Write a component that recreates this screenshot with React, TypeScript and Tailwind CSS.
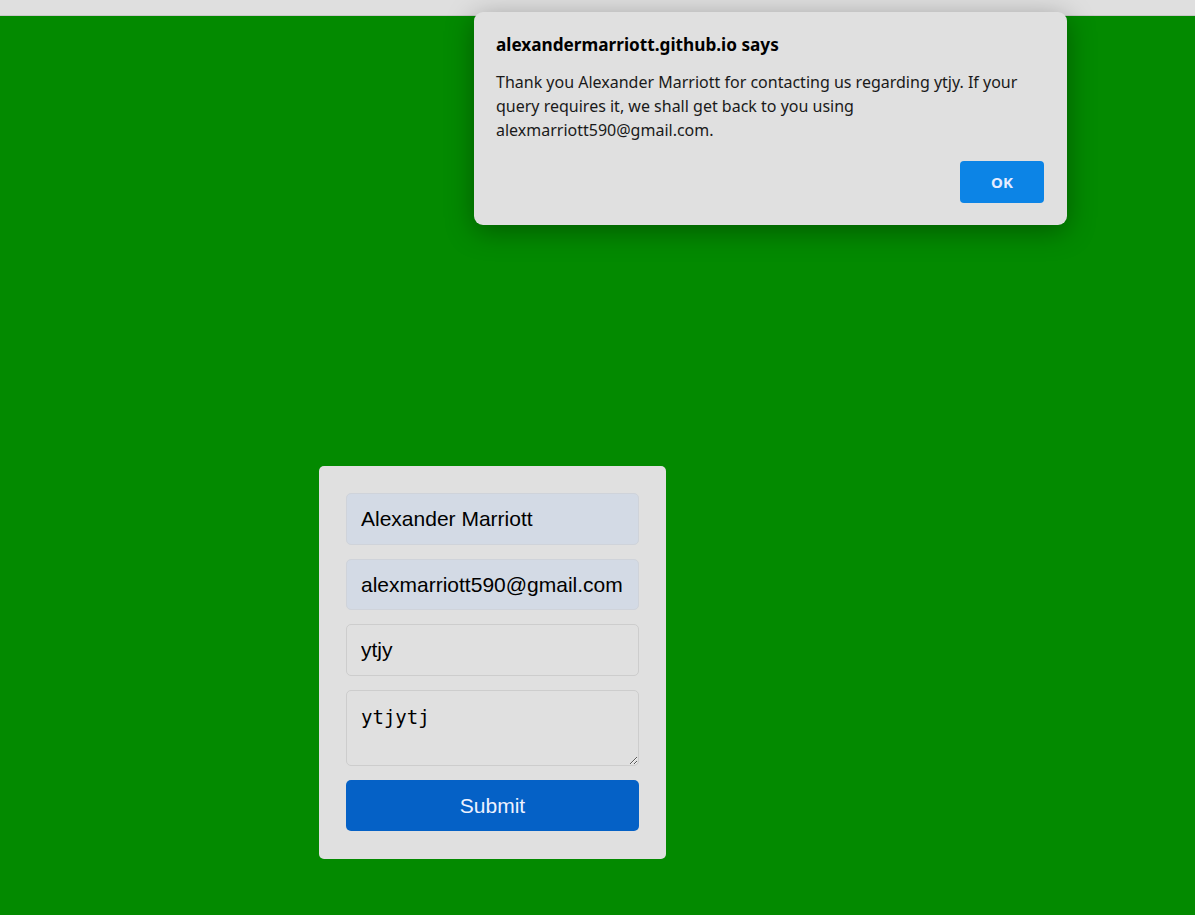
import { useState } from 'react';

export default function App() {
  const [name, setName] = useState('Alexander Marriott');
  const [email, setEmail] = useState('alexmarriott590@gmail.com');
  const [subject, setSubject] = useState('ytjy');
  const [message, setMessage] = useState('ytjytj');

  return (
    <div className="relative min-h-[915px] w-full bg-[#038a00] font-['Liberation_Sans',Arial,sans-serif]">
      <div className="h-[16px] border-b border-[#c8c8c8] bg-[#dfdfdf]" />

      <form
        className="ml-[319px] mt-[450px] flex w-[347px] flex-col gap-[14px] rounded-[5px] bg-[#e0e0e0] px-[27px] pb-[28px] pt-[27px]"
        onSubmit={(e) => e.preventDefault()}
      >
        <input
          value={name}
          onChange={(e) => setName(e.target.value)}
          className="h-[52px] w-full rounded-[5px] border border-[#cfd3da] bg-[#d3dae5] px-[14px] text-[21px] text-black outline-none"
        />
        <input
          value={email}
          onChange={(e) => setEmail(e.target.value)}
          className="h-[51px] w-full rounded-[5px] border border-[#cfd3da] bg-[#d3dae5] px-[14px] text-[21px] text-black outline-none"
        />
        <input
          value={subject}
          onChange={(e) => setSubject(e.target.value)}
          className="h-[52px] w-full rounded-[5px] border border-[#cdcdcd] bg-[#e0e0e0] px-[14px] text-[21px] text-black outline-none"
        />
        <textarea
          value={message}
          onChange={(e) => setMessage(e.target.value)}
          className="h-[76px] w-full rounded-[5px] border border-[#cdcdcd] bg-[#e0e0e0] px-[14px] pt-[14px] font-['DejaVu_Sans_Mono',monospace] text-[19px] leading-[24px] text-black outline-none"
        />
        <button
          type="submit"
          className="h-[51px] w-full rounded-[5px] bg-[#0561c6] text-[21px] text-[#eef2ff]"
        >
          Submit
        </button>
      </form>

      <div className="absolute left-[474px] top-[12px] h-[213px] w-[593px] rounded-[9px] bg-[#e0e0e0] pl-[22px] pr-[23px] pt-[22px] font-['Noto_Sans',sans-serif] shadow-[0_6px_28px_rgba(0,0,0,0.35)]">
        <div className="text-[17.2px] font-bold leading-[22px] text-black">alexandermarriott.github.io says</div>
        <p className="mt-[14px] w-[540px] text-[16px] leading-[24px] text-[#1a1a1a]">
          Thank you Alexander Marriott for contacting us regarding ytjy. If your
          <br />
          query requires it, we shall get back to you using
          <br />
          alexmarriott590@gmail.com.
        </p>
        <div className="mt-[19px] flex justify-end">
          <button className="h-[42px] w-[84px] rounded-[4px] bg-[#0c84e6] text-[15px] font-bold text-[#e6ecff]">
            OK
          </button>
        </div>
      </div>
    </div>
  );
}
